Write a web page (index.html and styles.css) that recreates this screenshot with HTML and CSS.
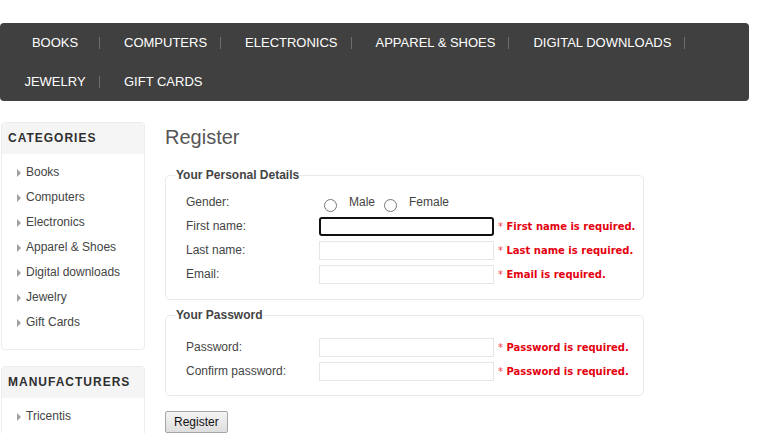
FILE: index.html
```html
<!DOCTYPE html>
<html lang="en">
<head>
<meta charset="utf-8">
<title>Register</title>
<link rel="stylesheet" href="styles.css">
</head>
<body>
<div class="page">
  <nav class="topnav">
    <ul class="topnav-list">
      <li class="topnav-item"><a href="#" class="topnav-link">Books</a><span class="sep"></span></li>
      <li class="topnav-item"><a href="#" class="topnav-link">Computers</a><span class="sep"></span></li>
      <li class="topnav-item"><a href="#" class="topnav-link">Electronics</a><span class="sep"></span></li>
      <li class="topnav-item"><a href="#" class="topnav-link">Apparel &amp; Shoes</a><span class="sep"></span></li>
      <li class="topnav-item"><a href="#" class="topnav-link">Digital downloads</a><span class="sep"></span></li>
      <li class="topnav-item"><a href="#" class="topnav-link">Jewelry</a><span class="sep"></span></li>
      <li class="topnav-item"><a href="#" class="topnav-link">Gift Cards</a></li>
    </ul>
  </nav>

  <div class="content">
    <aside class="side">
      <div class="block">
        <div class="block-title">Categories</div>
        <ul class="block-list">
          <li><a href="#">Books</a></li>
          <li><a href="#">Computers</a></li>
          <li><a href="#">Electronics</a></li>
          <li><a href="#">Apparel &amp; Shoes</a></li>
          <li><a href="#">Digital downloads</a></li>
          <li><a href="#">Jewelry</a></li>
          <li><a href="#">Gift Cards</a></li>
        </ul>
      </div>
      <div class="block">
        <div class="block-title">Manufacturers</div>
        <ul class="block-list">
          <li><a href="#">Tricentis</a></li>
        </ul>
      </div>
    </aside>

    <main class="main">
      <h1 class="page-title">Register</h1>
      <form class="reg-form">
        <fieldset class="group group-personal">
          <legend class="group-title">Your Personal Details</legend>
          <div class="row row-gender">
            <span class="row-label">Gender:</span>
            <span class="gender-opts">
              <input type="radio" name="gender" id="g-m" class="radio"><label for="g-m" class="radio-label">Male</label>
              <input type="radio" name="gender" id="g-f" class="radio"><label for="g-f" class="radio-label">Female</label>
            </span>
          </div>
          <div class="row">
            <label class="row-label" for="fn">First name:</label>
            <input type="text" id="fn" class="text-input is-focused">
            <span class="error"><span class="req">*</span> First name is required.</span>
          </div>
          <div class="row">
            <label class="row-label" for="ln">Last name:</label>
            <input type="text" id="ln" class="text-input">
            <span class="error"><span class="req">*</span> Last name is required.</span>
          </div>
          <div class="row">
            <label class="row-label" for="em">Email:</label>
            <input type="text" id="em" class="text-input">
            <span class="error"><span class="req">*</span> Email is required.</span>
          </div>
        </fieldset>

        <fieldset class="group group-password">
          <legend class="group-title">Your Password</legend>
          <div class="row">
            <label class="row-label" for="pw">Password:</label>
            <input type="password" id="pw" class="text-input">
            <span class="error"><span class="req">*</span> Password is required.</span>
          </div>
          <div class="row">
            <label class="row-label" for="pw2">Confirm password:</label>
            <input type="password" id="pw2" class="text-input">
            <span class="error"><span class="req">*</span> Password is required.</span>
          </div>
        </fieldset>

        <div class="actions">
          <button type="button" class="btn">Register</button>
        </div>
      </form>
    </main>
  </div>
</div>
</body>
</html>
```
FILE: styles.css
```css
html, body {
  margin: 0;
  padding: 0;
  background: #fff;
}
body {
  font-family: "Liberation Sans", Arial, sans-serif;
  font-size: 12px;
  color: #444;
}
.page {
  width: 749px;
  padding-top: 23px;
  padding-bottom: 60px;
}

/* top navigation */
.topnav {
  background: #404040;
  border-radius: 4px;
}
.topnav-list {
  list-style: none;
  margin: 0;
  padding: 0;
  display: flex;
  flex-wrap: wrap;
}
.topnav-item {
  display: flex;
  align-items: center;
  height: 39px;
}
.topnav-link {
  display: block;
  min-width: 62px;
  text-align: center;
  padding: 0 13px 0 24px;
  color: #fff;
  text-decoration: none;
  text-transform: uppercase;
  font-size: 13px;
}
.sep {
  display: block;
  width: 1px;
  height: 12px;
  background: #6e6e6e;
}

/* content */
.content {
  display: flex;
  gap: 20px;
  padding-left: 1px;
  margin-top: 21px;
}
.side {
  width: 144px;
  flex: none;
  display: flex;
  flex-direction: column;
  gap: 16px;
}
.block {
  border: 1px solid #ececec;
  border-radius: 4px;
}
.block-title {
  background: #f5f5f5;
  height: 31px;
  line-height: 31px;
  padding: 0 6px;
  font-weight: bold;
  font-size: 12px;
  letter-spacing: 1px;
  text-transform: uppercase;
  color: #2f2f2f;
}
.block-list {
  list-style: none;
  margin: 0;
  padding: 6px 0 14px 15px;
}
.block-list li {
  height: 25px;
  line-height: 25px;
  display: flex;
  align-items: center;
}
.block-list li::before {
  content: "";
  width: 0;
  height: 0;
  border-left: 4px solid #a0a0a0;
  border-top: 4px solid transparent;
  border-bottom: 4px solid transparent;
  margin-right: 5px;
}
.block-list a {
  color: #444;
  text-decoration: none;
}

/* main */
.main {
  width: 479px;
  flex: none;
}
.page-title {
  margin: 3px 0 19px;
  font-size: 20px;
  font-weight: normal;
  color: #555;
  line-height: 24px;
}
.group {
  margin: 0 0 8px;
  padding: 12px 0 13px 0;
  border: 1px solid #e9e9e9;
  border-radius: 5px;
}
.group-password {
  padding-top: 13px;
  padding-bottom: 12px;
}
.group-title {
  padding: 0;
  margin-left: 10px;
  font-weight: bold;
  font-size: 12px;
  color: #444;
}
.row {
  display: flex;
  align-items: center;
  height: 24px;
  padding-left: 20px;
}
.row-gender {
  height: 20px;
  align-items: flex-start;
}
.row-label {
  width: 133px;
  flex: none;
  line-height: 16px;
}
.gender-opts {
  display: flex;
  align-items: flex-start;
  line-height: 16px;
}
.radio {
  margin: 5px 3px 0 5px;
  width: 13px;
  height: 13px;
}
.radio-label {
  margin: 0 4px 0 9px;
}
.text-input {
  box-sizing: border-box;
  width: 175px;
  height: 19px;
  margin: 0;
  border: 1px solid #e6e6e6;
  border-radius: 0;
  padding: 0 2px;
  font: inherit;
}
.text-input.is-focused {
  border: 2px solid #111;
  border-radius: 3px;
}
.error {
  margin-left: 4px;
  font-family: "DejaVu Sans", Verdana, sans-serif;
  font-weight: bold;
  font-size: 10px;
  color: #e4000f;
  white-space: nowrap;
}
.req {
  font-weight: normal;
  color: #f04050;
}
.actions {
  padding-top: 7px;
}
.btn {
  font-family: "Liberation Sans", Arial, sans-serif;
  font-size: 12px;
  color: #111;
  height: 22px;
  padding: 0 8px;
  border: 1px solid #a5a5a5;
  border-radius: 2px;
  background: linear-gradient(#f4f4f4, #dedede);
}
```
